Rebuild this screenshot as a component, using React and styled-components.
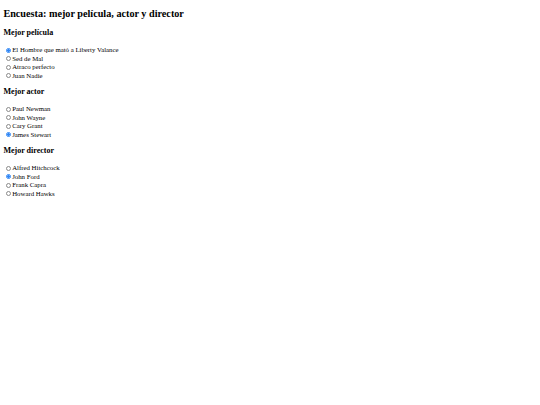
import React, { useState } from 'react';
import styled, { createGlobalStyle } from 'styled-components';

const GlobalStyle = createGlobalStyle`
  html, body {
    margin: 0;
    padding: 0;
    background: #ffffff;
  }
  body {
    font-family: "Liberation Serif", "Times New Roman", serif;
    color: #000000;
  }
`;

const Page = styled.div`
  padding: 0 3.4px;
  display: flow-root;
`;

const Title = styled.h2`
  font-size: 10.2px;
  font-weight: bold;
  margin: 7.5px 0 9.5px;
`;

const Group = styled.section`
  margin: 0;
`;

const GroupTitle = styled.h3`
  font-size: 8px;
  font-weight: bold;
  margin: 7px 0 9px;
`;

const Options = styled.div`
  display: flex;
  flex-direction: column;
`;

const Option = styled.label`
  display: flex;
  align-items: center;
  font-size: 6.8px;
  line-height: 8.5px;
  height: 8.5px;
  cursor: pointer;
`;

const Radio = styled.input.attrs({ type: 'radio' })`
  appearance: none;
  -webkit-appearance: none;
  box-sizing: border-box;
  width: 5.2px;
  height: 5.2px;
  margin: 0 1.3px 0 2.3px;
  flex: none;
  border: 0.6px solid #8a8a8a;
  border-radius: 50%;
  background: #fff;

  &:checked {
    border-color: #2f86f5;
    background: radial-gradient(circle, #2f86f5 0 1.2px, #cfe3fd 1.3px 1.7px, #2f86f5 1.8px);
  }
`;

const polls = [
  {
    id: 'pelicula',
    title: 'Mejor película',
    options: ['El Hombre que mató a Liberty Valance', 'Sed de Mal', 'Atraco perfecto', 'Juan Nadie'],
    selected: 0,
  },
  {
    id: 'actor',
    title: 'Mejor actor',
    options: ['Paul Newman', 'John Wayne', 'Cary Grant', 'James Stewart'],
    selected: 3,
  },
  {
    id: 'director',
    title: 'Mejor director',
    options: ['Alfred Hitchcock', 'John Ford', 'Frank Capra', 'Howard Hawks'],
    selected: 1,
  },
];

function Poll({ poll }) {
  const [value, setValue] = useState(poll.selected);
  return (
    <Group>
      <GroupTitle>{poll.title}</GroupTitle>
      <Options>
        {poll.options.map((opt, i) => (
          <Option key={opt}>
            <Radio name={poll.id} checked={value === i} onChange={() => setValue(i)} />
            {opt}
          </Option>
        ))}
      </Options>
    </Group>
  );
}

export default function App() {
  return (
    <>
      <GlobalStyle />
      <Page>
        <Title>Encuesta: mejor película, actor y director</Title>
        {polls.map((p) => (
          <Poll key={p.id} poll={p} />
        ))}
      </Page>
    </>
  );
}
